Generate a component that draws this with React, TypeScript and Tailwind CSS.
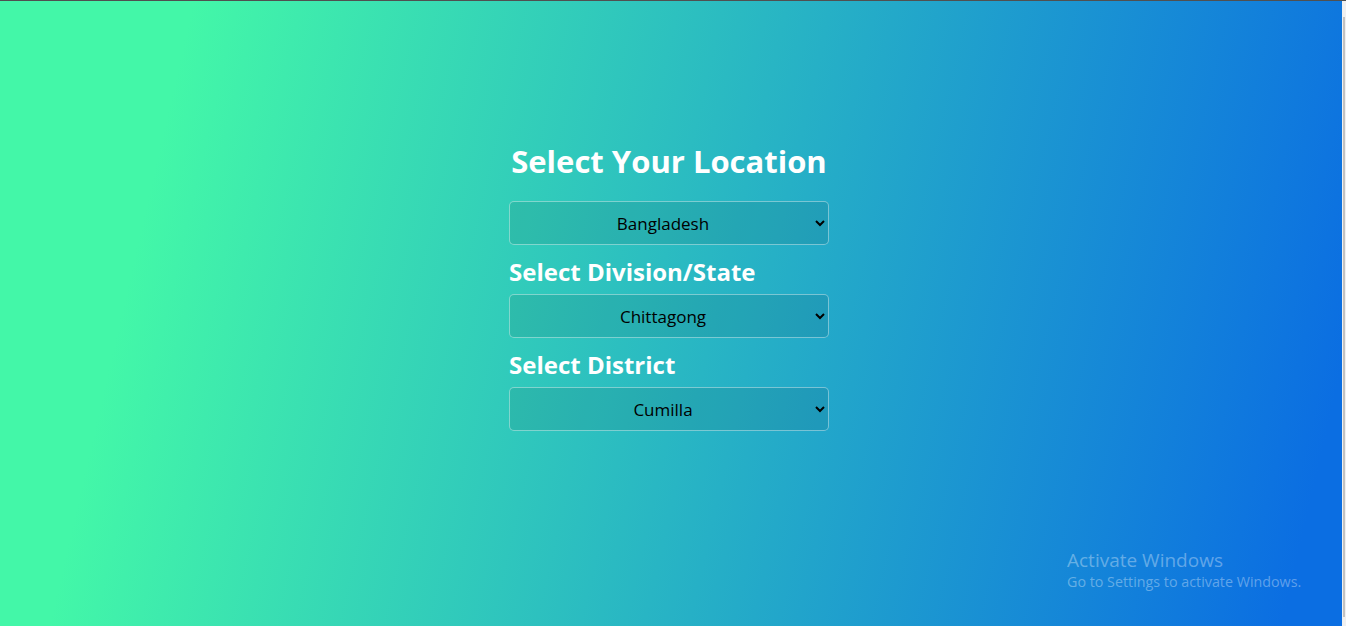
import React, { useState } from 'react';

const countries = ["Bangladesh", "India", "Nepal"];
const divisions = ["Chittagong", "Dhaka", "Khulna", "Rajshahi", "Sylhet"];
const districts = ["Cumilla", "Feni", "Noakhali", "Chandpur"];

const selectCls =
    "w-full h-[44px] rounded-[5px] border border-white/40 bg-black/[0.08] text-black text-[17px] [text-align-last:center] px-2 outline-none cursor-pointer";

const App: React.FC = () => {
    const [country, setCountry] = useState("Bangladesh");
    const [division, setDivision] = useState("Chittagong");
    const [district, setDistrict] = useState("Cumilla");

    return (
        <div className="relative flex h-[626px] w-full overflow-hidden border-t border-[#505050] font-['Open_Sans','Noto_Sans',sans-serif]">
            <main className="flex-1 h-full pr-[4px] bg-[linear-gradient(103deg,#43f7a8_13%,#0b6ee2_96%)]">
                <div className="mx-auto flex w-[320px] flex-col pt-[138px]">
                    <h1 className="text-center text-[31px] font-bold leading-[44px] text-white whitespace-nowrap">Select Your Location</h1>

                    <select className={`${selectCls} mt-[18px]`} value={country} onChange={e => setCountry(e.target.value)}>
                        {countries.map(c => <option key={c}>{c}</option>)}
                    </select>

                    <label className="mt-[9px] mb-[4px] text-[24px] font-bold leading-[36px] text-white whitespace-nowrap">Select Division/State</label>
                    <select className={selectCls} value={division} onChange={e => setDivision(e.target.value)}>
                        {divisions.map(d => <option key={d}>{d}</option>)}
                    </select>

                    <label className="mt-[9px] mb-[4px] text-[24px] font-bold leading-[36px] text-white whitespace-nowrap">Select District</label>
                    <select className={selectCls} value={district} onChange={e => setDistrict(e.target.value)}>
                        {districts.map(d => <option key={d}>{d}</option>)}
                    </select>
                </div>
            </main>

            {/* scrollbar strip */}
            <div className="h-full w-[4px] bg-[#f0f0f0] pt-[16px]">
                <div className="ml-[1px] h-[600px] w-[2px] bg-[#c2c2c2]" />
            </div>

            {/* windows watermark */}
            <div className="pointer-events-none absolute left-[1067px] top-[547px] font-['Open_Sans','Noto_Sans',sans-serif] text-white/35">
                <div className="text-[19px] leading-[24px]">Activate Windows</div>
                <div className="text-[14.3px] leading-[20px]">Go to Settings to activate Windows.</div>
            </div>
        </div>
    );
};

export default App;
